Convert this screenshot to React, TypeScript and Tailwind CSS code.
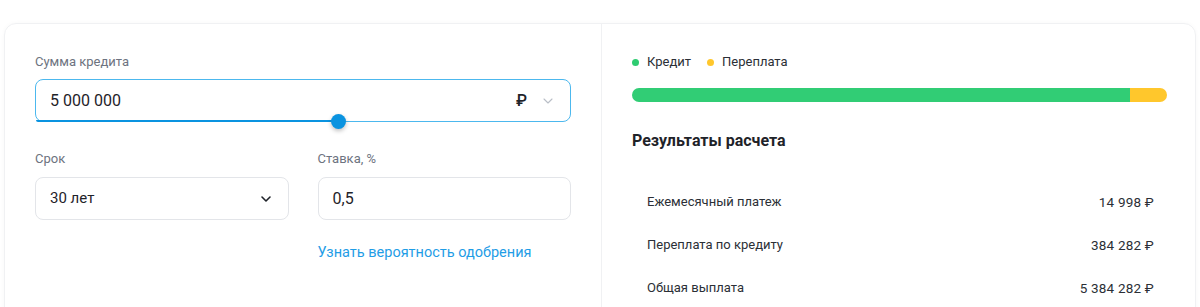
import { ChevronDown } from "lucide-react";

const rows = [
  { label: "Ежемесячный платеж", value: "14 998 ₽" },
  { label: "Переплата по кредиту", value: "384 282 ₽" },
  { label: "Общая выплата", value: "5 384 282 ₽" },
];

export default function App() {
  return (
    <div className="bg-white px-1 pt-[23px] h-[307px] overflow-hidden font-['Roboto',sans-serif] text-[#1f2329]">
      <div className="grid grid-cols-[597px_1fr] rounded-xl border border-[#f0f1f3] h-[320px] shadow-[0_0_4px_rgba(0,0,0,0.03)]">
        {/* left: form */}
        <div className="border-r border-[#f0f1f3] px-[30px] pt-[30px]">
          <label className="block text-[13px] leading-4 text-[#6d7380] mb-[9px]">Сумма кредита</label>
          <div className="relative h-[43px] rounded-lg border border-[#4cb8ee] flex items-center pl-[14px] pr-[14px]">
            <span className="text-[16px] text-[#1f2329]">5 000 000</span>
            <span className="ml-auto text-[16px] font-medium text-[#1f2329]">₽</span>
            <ChevronDown className="ml-[13px] w-[16px] h-[16px] text-[#b9bec7]" strokeWidth={1.6} />
            <div className="absolute left-0 right-0 -bottom-px h-[2px] rounded-b-lg overflow-hidden">
              <div className="h-full w-[303px] bg-[#0a93e0]" />
            </div>
            <div className="absolute left-[295px] -bottom-[8px] w-[15px] h-[15px] rounded-full bg-[#0a93e0] shadow-[0_2px_4px_rgba(0,0,0,0.25)]" />
          </div>

          <div className="grid grid-cols-2 gap-[29px] mt-[29px]">
            <div>
              <label className="block text-[13px] leading-4 text-[#6d7380] mb-[10px]">Срок</label>
              <div className="h-[43px] rounded-lg border border-[#e3e5e9] flex items-center pl-[14px] pr-[14px]">
                <span className="text-[15px]">30 лет</span>
                <ChevronDown className="ml-auto w-[16px] h-[16px] text-[#1f2329]" strokeWidth={2.4} />
              </div>
            </div>
            <div>
              <label className="block text-[13px] leading-4 text-[#6d7380] mb-[10px]">Ставка, %</label>
              <div className="h-[43px] rounded-lg border border-[#e3e5e9] flex items-center pl-[14px]">
                <span className="text-[16px]">0,5</span>
              </div>
              <a className="block mt-[23px] text-[14.5px] leading-5 text-[#1f9de6]">Узнать вероятность одобрения</a>
            </div>
          </div>
        </div>

        {/* right: results */}
        <div className="pl-[28px] pr-[28px] pt-[30px]">
          <div className="flex items-center gap-[16px] pl-[2px] text-[13px] leading-4 text-[#2b2f36]">
            <span className="flex items-center gap-[8px]">
              <span className="w-[7px] h-[7px] rounded-full bg-[#2ecc71]" />
              Кредит
            </span>
            <span className="flex items-center gap-[8px]">
              <span className="w-[7px] h-[7px] rounded-full bg-[#ffc72c]" />
              Переплата
            </span>
          </div>
          <div className="flex h-[14px] rounded-full overflow-hidden mt-[18px] ml-[2px]">
            <div className="h-full bg-[#31cd75] w-[93%]" />
            <div className="h-full bg-[#ffc72c] flex-1" />
          </div>
          <h3 className="mt-[29px] ml-[2px] text-[16px] leading-5 font-bold text-[#1f2329]">Результаты расчета</h3>
          <div className="mt-[43px] pl-[17px] pr-[13px] flex flex-col gap-[27px] text-[13px] leading-4 text-[#2b2f36]">
            {rows.map((r) => (
              <div key={r.label} className="flex justify-between">
                <span>{r.label}</span>
                <span className="text-[13.5px] tracking-[0.2px]">{r.value}</span>
              </div>
            ))}
          </div>
        </div>
      </div>
    </div>
  );
}
